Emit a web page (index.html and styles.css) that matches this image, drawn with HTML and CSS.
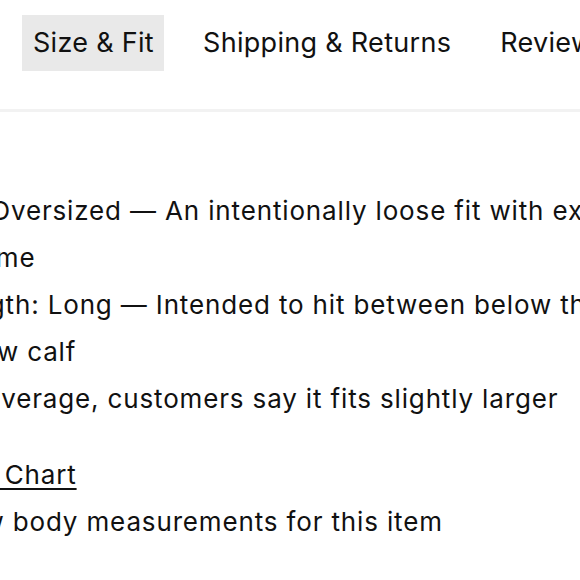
FILE: index.html
```html
<!DOCTYPE html>
<html>
<head>
<meta charset="utf-8">
<link rel="stylesheet" href="styles.css">
</head>
<body>
<div class="tabs-bar">
  <nav class="tabs">
    <span class="tab active">Size &amp; Fit</span>
    <span class="tab">Shipping &amp; Returns</span>
    <span class="tab">Reviews</span>
  </nav>
</div>
<section class="panel">
  <ul class="fit-list">
    <li>Fit: Oversized — An intentionally loose fit with extra<br>volume</li>
    <li>Length: Long — Intended to hit between below the knee and<br>below calf</li>
    <li>On average, customers say it fits slightly larger</li>
  </ul>
  <div class="chart">
    <a class="chart-link" href="#">Size Chart</a>
    <p class="chart-note">View body measurements for this item</p>
  </div>
</section>
</body>
</html>
```

FILE: styles.css
```css
html, body {
  margin: 0;
  padding: 0;
  background: #fff;
  overflow: hidden;
}
body {
  font-family: "Inter", "Lato", sans-serif;
  color: #111;
  width: 580px;
  height: 580px;
}
.tabs-bar {
  padding: 15px 0 38px 22px;
  border-bottom: 3px solid #f2f2f2;
}
.tabs {
  display: flex;
  gap: 28px;
  white-space: nowrap;
}
.tab {
  display: block;
  height: 56px;
  line-height: 56px;
  padding: 0 10px 0 11px;
  font-size: 27px;
  letter-spacing: 0.3px;
}
.tab.active {
  background: #e9e9e9;
}
.panel {
  padding-top: 75px;
  margin-left: -59px;
  font-size: 26px;
  letter-spacing: 0.85px;
  line-height: 47px;
  white-space: nowrap;
}
.fit-list {
  list-style: none;
  margin: 0;
  padding: 0;
}
.chart {
  margin-top: 29px;
}
.chart-link {
  color: #111;
  text-decoration: underline;
  text-underline-offset: 4px;
  text-decoration-thickness: 2px;
}
.chart-note {
  margin: 0;
}
```
